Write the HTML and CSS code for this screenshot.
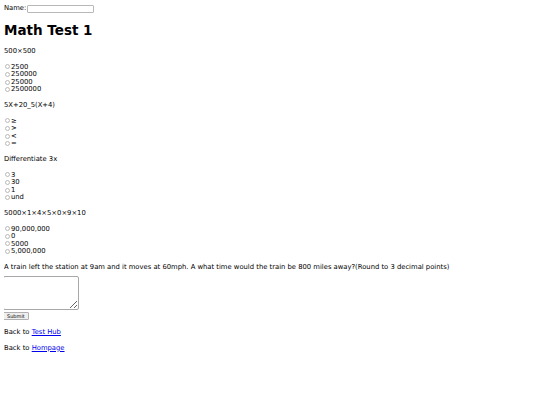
FILE: index.html
```html
<!DOCTYPE html>
<html>
<head>
<meta charset="utf-8">
<link rel="stylesheet" href="styles.css">
</head>
<body>
<form class="test">
<div class="name-row"><label for="name">Name:</label><input class="name-input" type="text" id="name"></div>
<h1 class="title">Math Test 1</h1>

<p class="q">500×500</p>
<div class="opts">
<label class="opt"><input class="radio" type="radio" name="q1">2500</label>
<label class="opt"><input class="radio" type="radio" name="q1">250000</label>
<label class="opt"><input class="radio" type="radio" name="q1">25000</label>
<label class="opt"><input class="radio" type="radio" name="q1">2500000</label>
</div>

<p class="q">5X+20_5(X+4)</p>
<div class="opts">
<label class="opt"><input class="radio" type="radio" name="q2">≥</label>
<label class="opt"><input class="radio" type="radio" name="q2">&gt;</label>
<label class="opt"><input class="radio" type="radio" name="q2">&lt;</label>
<label class="opt"><input class="radio" type="radio" name="q2">=</label>
</div>

<p class="q">Differentiate 3x</p>
<div class="opts">
<label class="opt"><input class="radio" type="radio" name="q3">3</label>
<label class="opt"><input class="radio" type="radio" name="q3">30</label>
<label class="opt"><input class="radio" type="radio" name="q3">1</label>
<label class="opt"><input class="radio" type="radio" name="q3">und</label>
</div>

<p class="q">5000×1×4×5×0×9×10</p>
<div class="opts">
<label class="opt"><input class="radio" type="radio" name="q4">90,000,000</label>
<label class="opt"><input class="radio" type="radio" name="q4">0</label>
<label class="opt"><input class="radio" type="radio" name="q4">5000</label>
<label class="opt"><input class="radio" type="radio" name="q4">5,000,000</label>
</div>

<p class="q q-open">A train left the station at 9am and it moves at 60mph. A what time would the train be 800 miles away?(Round to 3 decimal points)</p>
<div class="answer"><textarea class="answer-box"></textarea></div>
<div><button class="submit" type="button">Submit</button></div>
</form>
<p class="back">Back to <a href="#">Test Hub</a></p>
<p class="back">Back to <a href="#">Hompage</a></p>
</body>
</html>
```
FILE: styles.css
```css
html { background: #fff; }
body {
  margin: 4px;
  font-family: "DejaVu Sans", Verdana, sans-serif;
  font-size: 6.8px;
  line-height: 7.6px;
  color: #000;
}
.name-row {
  display: flex;
  align-items: center;
  height: 9px;
}
.name-input {
  width: 67px;
  height: 8px;
  box-sizing: border-box;
  margin: 0 0 0 1px;
  padding: 0 2px;
  border: 1px solid #b8b8b8;
  border-radius: 1px;
  font-size: 5px;
  background: #fff;
}
.title {
  font-size: 13.5px;
  line-height: 15px;
  margin: 10px 0 10px;
  font-weight: bold;
}
.q { margin: 8px 0; }
.q-open { margin-bottom: 5px; }
.opts { margin: 8px 0; }
.opt {
  display: flex;
  align-items: center;
  height: 7.6px;
}
.radio {
  appearance: none;
  -webkit-appearance: none;
  width: 5px;
  height: 5px;
  box-sizing: border-box;
  margin: -1px 1px 0 1px;
  border: 1px solid #b9b9b9;
  border-radius: 50%;
  background: #fff;
}
.answer { margin-top: 5px; height: 36px; }
.answer-box {
  width: 76px;
  height: 34px;
  box-sizing: border-box;
  margin: 0 0 0 -1px;
  border: 1px solid #a8a8a8;
  border-radius: 2px;
  font-size: 5px;
}
.submit {
  margin: 0 0 0 -1px;
  height: 8px;
  padding: 0 3px;
  font-family: "DejaVu Sans", sans-serif;
  font-size: 5px;
  line-height: 6px;
  border: 1px solid #b0b0b0;
  border-radius: 1px;
  background: #efefef;
  color: #000;
}
.back { margin: 8px 0; }
.back a { color: #0000ee; text-decoration: underline; }
```
